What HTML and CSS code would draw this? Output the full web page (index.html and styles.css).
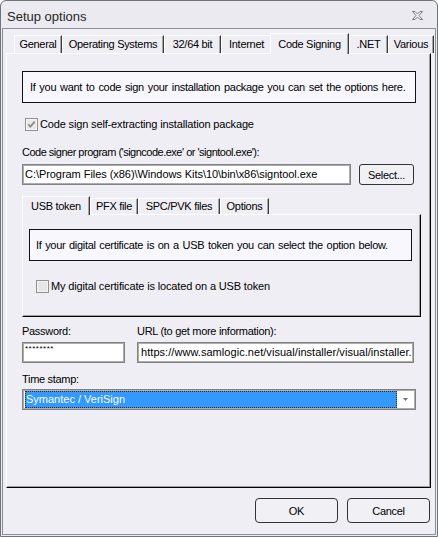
FILE: index.html
```html
<!DOCTYPE html>
<html>
<head>
<meta charset="utf-8">
<title>Setup options</title>
<link rel="stylesheet" href="styles.css">
</head>
<body>
<div class="window">
  <div class="titlebar">
    <span class="title">Setup options</span>
    <svg class="close" width="11" height="9" viewBox="0 0 11 9">
      <path d="M0.5 0.5 H3 L5.5 3 L8 0.5 H10.5 L7 4.5 L10.5 8.5 H8 L5.5 6 L3 8.5 H0.5 L4 4.5 Z" fill="#f2f2f4" stroke="#7a7a7e" stroke-width="1"/>
    </svg>
  </div>
  <div class="client">
    <div class="tabs outer-tabs">
      <div class="tab tab-general">General</div>
      <div class="tab tab-os">Operating Systems</div>
      <div class="tab tab-bit">32/64 bit</div>
      <div class="tab tab-internet">Internet</div>
      <div class="tab tab-code active">Code Signing</div>
      <div class="tab tab-net">.NET</div>
      <div class="tab tab-various">Various</div>
    </div>
    <div class="panel">
      <div class="info">If you want to code sign your installation package you can set the options here.</div>
      <div class="check-row outer-check">
        <svg class="cb" width="13" height="13" viewBox="0 0 13 13">
          <rect x="0.5" y="0.5" width="12" height="12" fill="#eaeaea" stroke="#8f9090"/>
          <rect x="1.5" y="1.5" width="10" height="10" fill="none" stroke="#f6f6f6"/>
          <path d="M3.2 6.2 L5.3 8.6 L9.8 3.6" fill="none" stroke="#8a8a8a" stroke-width="1.7"/>
        </svg>
        <span class="cb-label">Code sign self-extracting installation package</span>
      </div>
      <div class="label signer-label">Code signer program ('signcode.exe' or 'signtool.exe'):</div>
      <div class="signer-row">
        <div class="field signer-field">C:\Program Files (x86)\Windows Kits\10\bin\x86\signtool.exe</div>
        <div class="btn select-btn">Select...</div>
      </div>
      <div class="tabs inner-tabs">
        <div class="tab tab-usb active">USB token</div>
        <div class="tab tab-pfx">PFX file</div>
        <div class="tab tab-spc">SPC/PVK files</div>
        <div class="tab tab-options">Options</div>
      </div>
      <div class="inner-panel">
        <div class="info inner-info">If your digital certificate is on a USB token you can select the option below.</div>
        <div class="check-row inner-check">
          <svg class="cb" width="13" height="13" viewBox="0 0 13 13">
            <rect x="0.5" y="0.5" width="12" height="12" fill="#e6e6e6" stroke="#8f9090"/>
            <rect x="1.5" y="1.5" width="10" height="10" fill="none" stroke="#f4f4f4"/>
          </svg>
          <span class="cb-label">My digital certificate is located on a USB token</span>
        </div>
      </div>
      <div class="pair-row">
        <div class="col pw-col">
          <div class="label">Password:</div>
          <div class="field pw-field">********</div>
        </div>
        <div class="col url-col">
          <div class="label">URL (to get more information):</div>
          <div class="field url-field">https://www.samlogic.net/visual/installer/visual/installer.</div>
        </div>
      </div>
      <div class="label ts-label">Time stamp:</div>
      <div class="combo">
        <div class="combo-sel">Symantec / VeriSign</div>
        <div class="combo-arrow">
          <svg width="5" height="3" viewBox="0 0 5 3"><path d="M0 0 H5 L2.5 3 Z" fill="#707070"/></svg>
        </div>
      </div>
    </div>
    <div class="buttons">
      <div class="btn dlg-btn">OK</div>
      <div class="btn dlg-btn">Cancel</div>
    </div>
  </div>
</div>
</body>
</html>
```

FILE: styles.css
```css
* {
  box-sizing: border-box;
}

html, body {
  margin: 0;
  padding: 0;
}

body {
  width: 438px;
  height: 537px;
  background: #ffffff;
  font-family: "Liberation Sans", Arial, sans-serif;
  font-size: 11px;
  letter-spacing: -0.3px;
  color: #000;
}

.window {
  width: 438px;
  height: 537px;
  border: 1px solid #6f737a;
  border-radius: 6px 6px 0 0;
  background: #ebeaf0;
  padding: 0 1px 1px 1px;
  display: flex;
  flex-direction: column;
}

.titlebar {
  height: 27px;
  flex: none;
  display: flex;
  align-items: flex-start;
  justify-content: space-between;
  padding: 0 13px 0 5px;
}

.title {
  margin-top: 8px;
  font-size: 13px;
  line-height: 15px;
  letter-spacing: 0;
  color: #262626;
}

.close {
  margin-top: 10px;
}

.client {
  flex: 1;
  border: 1px solid #8d9095;
  background: #efeef4;
  padding: 4px 4px 11px 3px;
  display: flex;
  flex-direction: column;
}

.tabs {
  display: flex;
  align-items: flex-end;
  flex: none;
}

.outer-tabs {
  height: 20px;
  padding-left: 8px;
}

.tab {
  height: 18px;
  padding: 0;
  display: flex;
  justify-content: center;
  line-height: 17px;
  border-top: 1px solid #ffffff;
  border-left: 1px solid #ffffff;
  border-right: 1px solid #3c3c3c;
  box-shadow: inset -1px 0 0 #a6a6a6;
  white-space: nowrap;
  background: #efeef4;
  flex: none;
}

.tab-general { width: 48px; }
.tab-os { width: 102px; }
.tab-bit { width: 57px; }
.tab-internet { width: 51px; }
.tab-code { width: 79px; }
.tab-net { width: 39px; }
.tab-various { width: 46px; }

.tab-usb { width: 68px; }
.tab-pfx { width: 48px; }
.tab-spc { width: 82px; }
.tab-options { width: 49px; }

.tab.active {
  position: relative;
  z-index: 2;
  margin-bottom: -1px;
  margin-left: -2px;
  padding-top: 2px;
  padding-bottom: 1px;
}

.outer-tabs .tab.active {
  height: 21px;
}

.panel {
  flex: 1;
  border-style: solid;
  border-width: 1px;
  border-color: #ffffff #000000 #000000 #ffffff;
  box-shadow: inset -1px -1px 0 #a0a0a0;
  padding: 17px 9px 0 15px;
  display: flex;
  flex-direction: column;
}

.info {
  height: 32px;
  flex: none;
  border: 1px solid #111111;
  background: #f7f7fd;
  line-height: 30px;
  white-space: nowrap;
  word-spacing: 1.1px;
}

.panel > .info {
  padding-left: 7px;
  margin-right: 5px;
}

.check-row {
  height: 13px;
  display: flex;
  align-items: center;
  flex: none;
}

.outer-check {
  margin-top: 15px;
}

.outer-check .cb {
  margin-left: 3px;
}

.cb-label {
  margin-left: 2px;
  line-height: 13px;
  white-space: nowrap;
  letter-spacing: -0.15px;
}

.label {
  height: 13px;
  line-height: 13px;
  white-space: nowrap;
  flex: none;
}

.signer-label {
  margin-top: 15px;
  letter-spacing: -0.5px;
}

.signer-row {
  margin-top: 5px;
  margin-right: 7px;
  height: 21px;
  display: flex;
  gap: 8px;
  flex: none;
}

.field {
  height: 21px;
  border: 1px solid #828282;
  box-shadow: inset 0 0 0 1px #acacac;
  background: #ffffff;
  padding-left: 2px;
  line-height: 19px;
  white-space: nowrap;
  overflow: hidden;
}

.signer-field {
  flex: 1;
  letter-spacing: -0.05px;
}

.btn {
  display: flex;
  align-items: center;
  justify-content: center;
  border: 1px solid #333333;
  border-radius: 3px;
  background: #f1f0f5;
  white-space: nowrap;
}

.select-btn {
  width: 55px;
  height: 21px;
}

.inner-tabs {
  margin-top: 11px;
  height: 18px;
  padding-left: 2px;
}

.inner-tabs .tab {
  height: 16px;
  line-height: 15px;
}

.inner-tabs .tab.active {
  height: 19px;
}

.inner-panel {
  height: 103px;
  flex: none;
  border-style: solid;
  border-width: 1px;
  border-color: #ffffff #000000 #000000 #ffffff;
  box-shadow: inset -1px -1px 0 #a0a0a0;
  padding: 14px 8px 0 6px;
  display: flex;
  flex-direction: column;
}

.inner-info {
  padding-left: 6px;
  word-spacing: 0.9px;
}

.inner-check {
  margin-top: 19px;
}

.inner-check .cb {
  margin-left: 7px;
}

.pair-row {
  margin-top: 8px;
  margin-right: 7px;
  display: flex;
  gap: 12px;
  flex: none;
}

.col {
  display: flex;
  flex-direction: column;
}

.col .field {
  margin-top: 4px;
}

.pw-col {
  width: 103px;
}

.url-col {
  flex: 1;
}

.pw-field {
  font-size: 8px;
  line-height: 11px;
  letter-spacing: 0.5px;
}

.url-field {
  padding-left: 3px;
  letter-spacing: 0.05px;
}

.ts-label {
  margin-top: 10px;
}

.combo {
  margin-top: 3px;
  margin-right: 5px;
  height: 21px;
  flex: none;
  display: flex;
  border: 1px solid #828282;
  box-shadow: inset 0 0 0 1px #acacac;
  background: #ffffff;
  padding: 1px 1px 1px 2px;
}

.combo-sel {
  flex: 1;
  background: #3399ff;
  border: 1px dotted #3a2a10;
  color: #ffffff;
  line-height: 15px;
  white-space: nowrap;
  letter-spacing: 0;
}

.combo-arrow {
  width: 17px;
  display: flex;
  align-items: center;
  justify-content: center;
}

.buttons {
  margin-top: 10px;
  margin-right: 1px;
  height: 25px;
  display: flex;
  justify-content: flex-end;
  gap: 9px;
  flex: none;
}

.dlg-btn {
  width: 83px;
  height: 25px;
  border-radius: 4px;
}
```
